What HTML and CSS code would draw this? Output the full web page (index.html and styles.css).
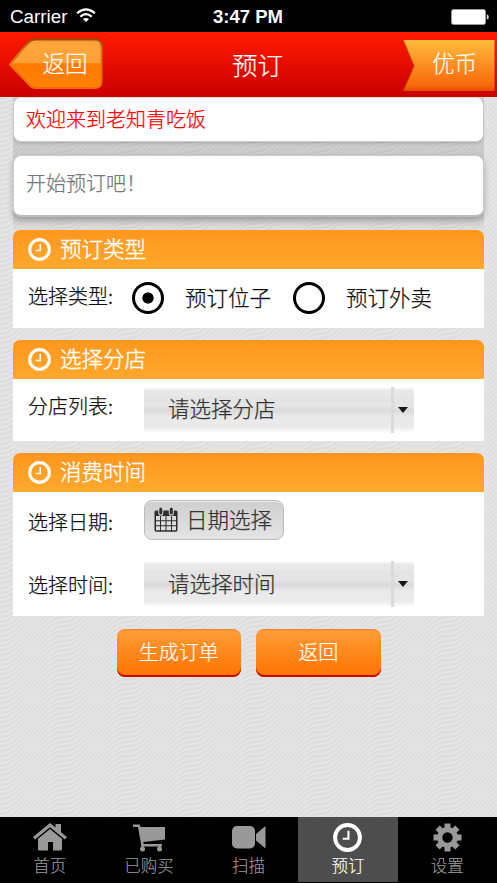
FILE: index.html
```html
<!DOCTYPE html>
<html lang="zh-CN">
<head>
<meta charset="utf-8">
<title>预订</title>
<link rel="stylesheet" href="styles.css">
</head>
<body>
<svg width="0" height="0" class="defs" aria-hidden="true">
  <defs>
    <symbol id="clock" viewBox="0 0 28 28"><circle cx="14" cy="14" r="12" fill="none" stroke="currentColor" stroke-width="3.8"/><path d="M14.9 7.4v7.8H9.4" fill="none" stroke="currentColor" stroke-width="2"/></symbol>
    <linearGradient id="backFill" x1="0" y1="0" x2="0" y2="1"><stop offset="0" stop-color="#f99a31"/><stop offset=".12" stop-color="#ffa53b"/><stop offset=".48" stop-color="#ffa137"/><stop offset=".5" stop-color="#ff7a00"/><stop offset="1" stop-color="#ff8308"/></linearGradient>
    <linearGradient id="backEdge" x1="0" y1="0" x2="0" y2="1"><stop offset="0" stop-color="#934b00"/><stop offset=".2" stop-color="#d47918"/><stop offset="1" stop-color="#f5690d"/></linearGradient>
    <linearGradient id="coinFill" x1="0" y1="0" x2="0" y2="1"><stop offset="0" stop-color="#ffbd3c"/><stop offset=".9" stop-color="#f8670c"/><stop offset="1" stop-color="#e34d00"/></linearGradient>
  </defs>
</svg>
<div class="phone">
  <div class="status">
    <div class="carrier"><span>Carrier</span>
      <svg class="wifi" width="20" height="15" viewBox="0 0 20 15" fill="none" stroke="#fff" stroke-width="2.1"><path d="M1.1 5.2Q10-2.6 18.9 5.2M4.3 8.6q5.7-4.8 11.4 0"/><path d="M7 11q3-2.1 6 0l-3 3z" fill="#fff" stroke="none"/></svg>
    </div>
    <div class="time">3:47 PM</div>
    <svg class="battery" width="38" height="16" viewBox="0 0 38 16"><rect x=".5" y=".5" width="34" height="15" rx="2" fill="#fff" stroke="#999"/><path d="M35.8 5.3q2 .6 2 2.6t-2 2.6z" fill="#ddd"/></svg>
  </div>
  <header class="navbar">
    <a class="back">
      <svg class="shape" width="94" height="52" viewBox="0 0 94 52"><path d="M1 26.5 19 5q3-3.5 7-3.5h60q6.500 0 6.500 6.500v35q0 7-7 7H27q-4 0-7-3.500z" fill="url(#backFill)" stroke="url(#backEdge)" stroke-width="2"/></svg>
      <span>返回</span>
    </a>
    <h1>预订</h1>
    <a class="coin">
      <svg class="shape" width="92" height="51" viewBox="0 0 92 51"><path d="M0 0h91.500v51H0l11-25z" fill="url(#coinFill)"/><path d="M.5.5 11 26 .5 50.500" fill="none" stroke="#b83a08" stroke-width="1.500" opacity=".55"/></svg>
      <span>优币</span>
    </a>
  </header>
  <main>
    <div class="intro">
      <div class="card welcome">欢迎来到老知青吃饭</div>
      <div class="card hint">开始预订吧！</div>
    </div>
    <section class="panel type">
      <h2><svg class="icon"><use href="#clock"/></svg><span>预订类型</span></h2>
      <div class="row"><span class="label">选择类型:</span>
        <span class="radio on"></span><span class="option">预订位子</span>
        <span class="radio"></span><span class="option">预订外卖</span>
      </div>
    </section>
    <section class="panel branch">
      <h2><svg class="icon"><use href="#clock"/></svg><span>选择分店</span></h2>
      <div class="row"><span class="label">分店列表:</span>
        <div class="select"><span>请选择分店</span><i></i></div>
      </div>
    </section>
    <section class="panel when">
      <h2><svg class="icon"><use href="#clock"/></svg><span>消费时间</span></h2>
      <div class="row date"><span class="label">选择日期:</span>
        <div class="datebtn">
          <svg width="24" height="25" viewBox="0 0 24 25"><path fill="#2c2c2c" fill-rule="evenodd" d="M2 3.500h20q1.500 0 1.500 1.500v18q0 1.800-1.800 1.800H2.300Q.5 24.800.5 23V5q0-1.500 1.500-1.500zM2 9v4.200h4V9zm5 0v4.200h4.500V9zm5.500 0v4.200H17V9zM18 9v4.200h4V9zM2 14.200v4h4v-4zm5 0v4h4.500v-4zm5.500 0v4H17v-4zm5.500 0v4h4v-4zM2 19.200v4h4v-4zm5 0v4h4.500v-4zm5.500 0v4H17v-4zm5.500 0v4h4v-4z"/><path d="M6.800 2.200v4M17.300 2.200v4" stroke="#d8d8d8" stroke-width="5" stroke-linecap="round"/><path d="M6.800 2v4M17.300 2v4" stroke="#2c2c2c" stroke-width="3" stroke-linecap="round"/></svg>
          <span>日期选择</span>
        </div>
      </div>
      <div class="row hour"><span class="label">选择时间:</span>
        <div class="select"><span>请选择时间</span><i></i></div>
      </div>
    </section>
    <div class="actions"><button>生成订单</button><button>返回</button></div>
  </main>
  <nav class="tabs">
    <a><svg width="34" height="29" viewBox="0 0 34 29" fill="#999"><path d="M0 14 17 0l5.500 4.600V1H28v8.200L34 14l-2 2.500L17 4.200 2 16.500z"/><path d="m17 6 12 9.800V26q0 1.500-1.500 1.500H20V19h-5v8.500H6.500Q5 27.500 5 26V15.800z"/></svg><span>首页</span></a>
    <a><svg width="32" height="29" viewBox="0 0 32 29" fill="#999"><path d="M0 1.500h6.800L7.500 4H32v12.500L10.300 19l.4 2H29v2.500H8.500L5 4H0z"/><circle cx="9.500" cy="26" r="2.500"/><circle cx="26.500" cy="26" r="2.500"/><path d="M8.500 22h2v3h-2zM25.500 22h2v3h-2z"/></svg><span>已购买</span></a>
    <a><svg width="34" height="29" viewBox="0 0 34 29" fill="#999"><rect x="0" y="3" width="23" height="22.500" rx="5"/><path d="m24 11 9.500-8v22.500L24 17.500z"/></svg><span>扫描</span></a>
    <a class="active"><svg width="29" height="29"><use href="#clock"/></svg><span>预订</span></a>
    <a><svg width="29" height="29" viewBox="-14.500 -14.500 29 29" fill="#999"><path d="M-3-14h6v6h-6zM-3 8h6v6h-6z"/><path d="M-3-14h6v6h-6zM-3 8h6v6h-6z" transform="rotate(45)"/><path d="M-3-14h6v6h-6zM-3 8h6v6h-6z" transform="rotate(90)"/><path d="M-3-14h6v6h-6zM-3 8h6v6h-6z" transform="rotate(135)"/><circle r="7.800" fill="none" stroke="#999" stroke-width="5.200"/></svg><span>设置</span></a>
  </nav>
</div>
</body>
</html>
```
FILE: styles.css
```css
* { box-sizing: border-box; }
body { margin: 0; font-family: "Noto Sans CJK SC", sans-serif; font-weight: 300; color: #111; }
.defs { position: absolute; }
.phone {
  display: flex; flex-direction: column; width: 497px; height: 883px; overflow: hidden;
  background: #dedede url("data:image/svg+xml,%3Csvg xmlns='http://www.w3.org/2000/svg' width='64' height='48'%3E%3Cpath fill='none' stroke='%23e7e7e7' stroke-width='1.500' d='M0 0c26 0 38-48 64-48M0 4.800c26 0 38-48 64-48M0 9.600c26 0 38-48 64-48M0 14.400c26 0 38-48 64-48M0 19.200c26 0 38-48 64-48M0 24c26 0 38-48 64-48M0 28.800c26 0 38-48 64-48M0 33.600c26 0 38-48 64-48M0 38.400c26 0 38-48 64-48M0 43.200c26 0 38-48 64-48M0 48c26 0 38-48 64-48M0 52.800c26 0 38-48 64-48M0 57.600c26 0 38-48 64-48M0 62.400c26 0 38-48 64-48M0 67.200c26 0 38-48 64-48M0 72c26 0 38-48 64-48M0 76.800c26 0 38-48 64-48M0 81.600c26 0 38-48 64-48M0 86.400c26 0 38-48 64-48M0 91.200c26 0 38-48 64-48M0 96c26 0 38-48 64-48'/%3E%3C/svg%3E");
}
.status {
  display: grid; grid-template-columns: 1fr auto 1fr; align-items: center; flex: none;
  height: 32px; padding: 2px 9px 0 10px; background: #000; color: #fff;
  font: 400 18.800px/30px "Liberation Sans", sans-serif;
}
.carrier { display: flex; align-items: center; gap: 9px; }
.wifi { margin-top: -3px; }
.time { font-weight: 700; font-size: 18.500px; margin-left: -2px; }
.battery { justify-self: end; margin-right: -1px; }
.navbar {
  display: flex; justify-content: space-between; align-items: flex-start; flex: none;
  height: 65px; padding: 6px 2px 0 9px; color: #fff;
  background: linear-gradient(#ff1b00, #c90000);
}
.navbar h1 { margin: 0 0 0 9px; font-size: 25.500px; font-weight: 300; line-height: 52px; }
.navbar { -webkit-text-stroke: .2px; }
.back, .coin { position: relative; display: block; height: 52px; font-size: 22.500px; line-height: 49px; text-align: center; }
.back { width: 94px; padding-left: 18px; }
.coin { width: 92px; margin-top: 2px; padding-left: 11px; line-height: 45px; }
.shape { position: absolute; left: 0; top: 0; }
.back span, .coin span { position: relative; }
main { flex: 1; padding: 0 13px; }
.intro { height: 133px; background: linear-gradient(rgba(0,0,0,.1) 0 119px, rgba(0,0,0,.1) 119px, rgba(0,0,0,.02)); }
.card { background: #fff; border: 1px solid #cacaca; border-radius: 8px; padding-left: 12px; font-size: 20px; -webkit-text-stroke: .25px; }
.welcome { height: 45px; line-height: 42px; color: #f00; border-top-color: #ddd; box-shadow: 0 2px 3px rgba(0,0,0,.12); }
.hint { height: 62px; margin-top: 13px; line-height: 53px; color: #777; border-bottom: 2px solid #bdbdbd; box-shadow: 0 3px 6px rgba(0,0,0,.25); }
.panel { width: 471px; background: #fff; border-radius: 8px 8px 0 0; margin-bottom: 12px; }
.panel h2 {
  display: flex; align-items: center; gap: 9px; margin: 0; height: 38.500px; padding-left: 15px;
  border-radius: 7px 7px 0 0; background: linear-gradient(#ff961e, #ffa92d);
  color: #fff; font-size: 21.500px; font-weight: 300; line-height: 36px; -webkit-text-stroke: .4px;
}
.panel h2 span { padding-bottom: 2px; }
.icon { width: 23px; height: 23px; }
.row { display: flex; align-items: flex-start; padding-left: 15px; -webkit-text-stroke: .25px; }
.label { width: 87px; flex: none; font-size: 20px; line-height: 28px; font-weight: 300; white-space: nowrap; }
.type { height: 98px; }
.type .row { padding-top: 13px; }
.type .label { width: 104px; }
.radio { flex: none; width: 32px; height: 32px; margin: 0; border: 3px solid #000; border-radius: 50%; background: #fff; }
.radio.on { background: radial-gradient(circle, #000 5.200px, #fff 6px); }
.option { width: 129px; flex: none; padding-left: 21px; font-size: 21.500px; line-height: 30px; white-space: nowrap; }
.branch { height: 101px; }
.branch .row { padding-top: 8px; }
.branch .label { padding-top: 5px; }
.branch .label, .when .label { width: 116px; }
.select {
  display: flex; width: 270px; height: 46px; border-radius: 4px; font-size: 21.500px; line-height: 42px; color: #333;
  background: linear-gradient(#fff, #e7e7e7 8%, #e8e8e8 18%, #e3e3e3 24%, #e5e5e5 40%, #dadada 52%, #e9e9e9 64%, #ebebeb 88%, #fff);
}
.select span { flex: 1; padding-left: 24px; }
.select i { display: flex; align-items: center; width: 23px; padding-left: 4px; border-left: 3px solid #dadada; }
.select i::before { content: ""; border: 5px solid transparent; border-top: 6px solid #161616; border-bottom: 0; }
.when { height: 163px; }
.date { padding-top: 8px; }
.date .label { padding-top: 8px; }
.datebtn {
  display: flex; align-items: center; gap: 8px; width: 140px; height: 40px; margin-bottom: 1px; padding-left: 9px;
  border: 1.500px solid #bbb; border-radius: 8px; background: linear-gradient(#cecece, #e4e4e4);
  font-size: 21.500px; line-height: 34px; color: #333; white-space: nowrap; box-shadow: inset 0 1px #eee;
}
.datebtn span { margin-top: -2px; }
.datebtn svg { margin-top: -1px; }
.hour { padding-top: 20px; }
.hour .label { padding-top: 10px; }
.hour .select { line-height: 44px; }
.actions { display: flex; justify-content: center; gap: 15px; }
.actions button {
  width: 124.500px; height: 48px; margin: 1px 0 0; padding: 0 0 4px; border: 0; border-top: 1px solid #f0852a; border-radius: 8px;
  background: linear-gradient(#ff9c38, #ff7300); box-shadow: inset 0 -2px #c80900;
  color: #fff; font: 300 20px "Noto Sans CJK SC", sans-serif; -webkit-text-stroke: .2px;
}
.tabs { display: flex; height: 66px; flex: none; background: #000; }
.tabs a { display: flex; flex: 1; flex-direction: column; align-items: center; padding-top: 6px; height: 65px; color: #999; font-size: 16.500px; line-height: 27px; -webkit-text-stroke: .15px; }
.tabs svg { flex: none; }
.tabs .active { color: #fff; background: #4d4d4d; }
```
